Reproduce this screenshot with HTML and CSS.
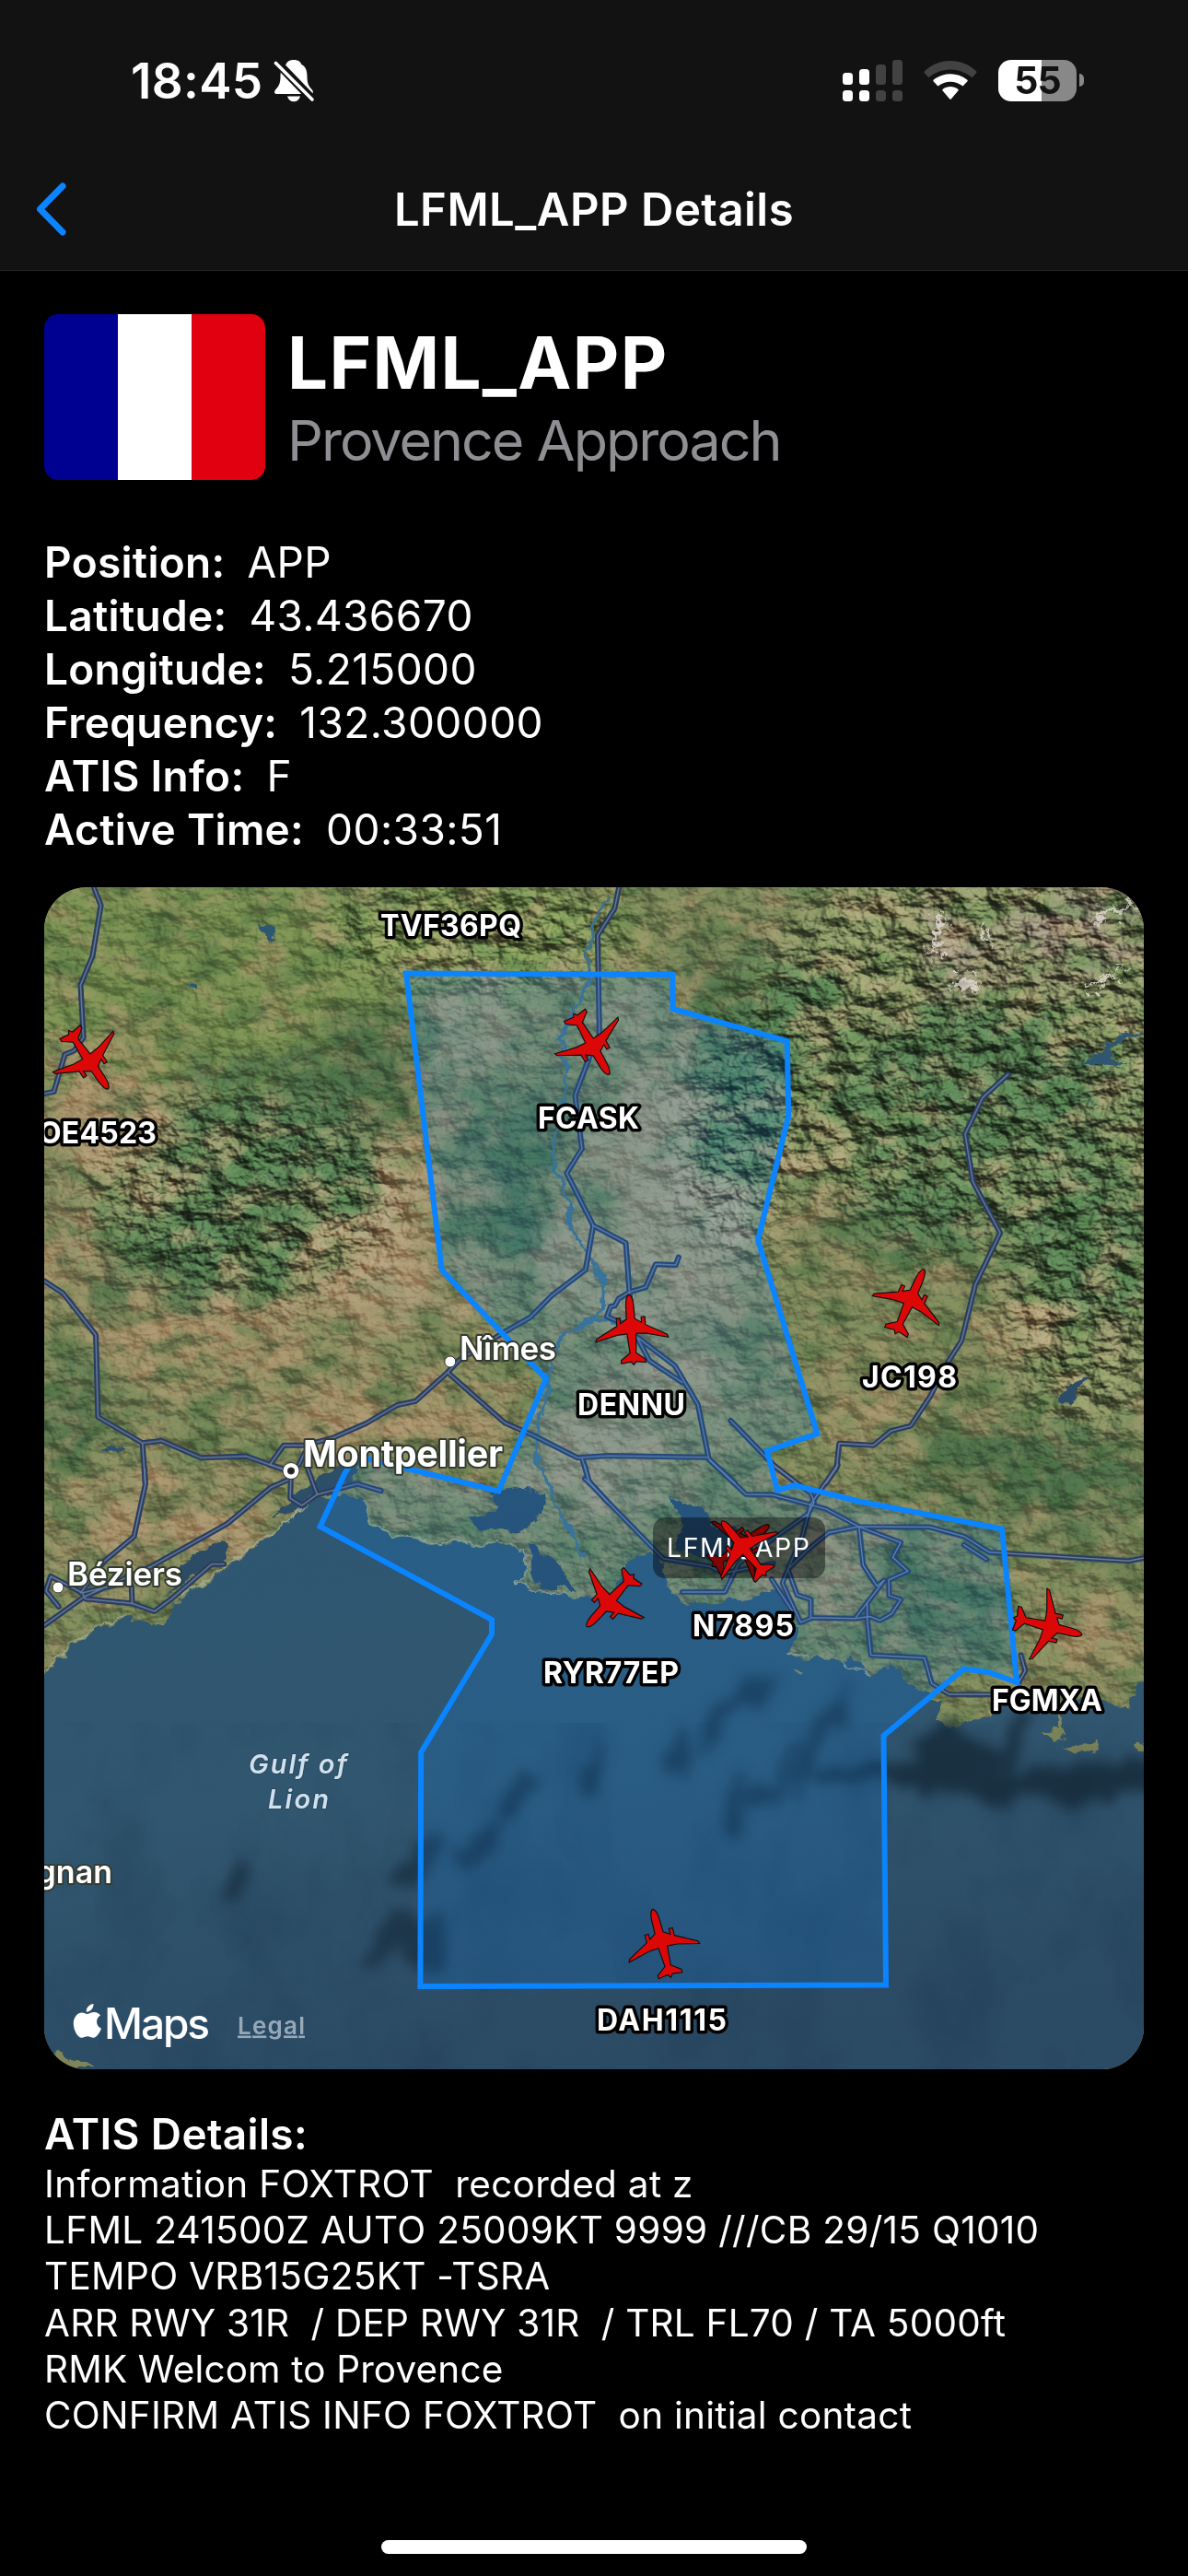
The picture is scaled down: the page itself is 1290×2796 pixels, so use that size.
FILE: index.html
```html
<!DOCTYPE html>
<html lang="en">
<head>
<meta charset="utf-8">
<title>LFML_APP Details</title>
<link rel="stylesheet" href="styles.css">
</head>
<body>
<div class="screen">
  <header class="top">
    <div class="status">
      <div class="clock">
        <span class="time">18:45</span>
        <svg class="bell" width="44" height="48" viewBox="0 0 44 48" fill="#fff">
          <path d="M22 1c-5 0-7.600 2.300-8.400 5C9 8 7.500 13 7.500 19c0 8-2 10.500-5 14-2.500 3-1.500 5 1.500 5h36c3 0 4-2 1.500-5-3-3.500-5-6-5-14 0-6-1.500-11-6.100-13C29.600 3.300 27 1 22 1z"/>
          <path d="M15 40.500h14c-1 3.800-3.600 5.800-7 5.800s-6-2-7-5.800z"/>
          <path d="M2.500 2.500L42 43.500" stroke="#121212" stroke-width="9.500"/>
          <path d="M2.500 4.500L42 44" stroke="#fff" stroke-width="3.600" stroke-linecap="round"/>
        </svg>
      </div>
      <div class="indicators">
        <svg width="65" height="45" viewBox="0 0 65 45">
          <g fill="#fff"><rect y="14" width="11" height="13" rx="3.500"/><rect x="18" y="10" width="11" height="17" rx="3.500"/><rect y="33" width="11" height="12" rx="3.500"/><rect x="18" y="33" width="11" height="12" rx="3.500"/></g>
          <g fill="#424242"><rect x="36" y="5" width="11" height="22" rx="3.500"/><rect x="54" width="11" height="27" rx="3.500"/><rect x="36" y="33" width="11" height="12" rx="3.500"/><rect x="54" y="33" width="11" height="12" rx="3.500"/></g>
        </svg>
        <svg class="wifi" width="58" height="43" viewBox="0 0 58 43">
          <path fill="#424242" d="M.8 13.200Q0 12.200 1 11.200C17-3.600 41-3.600 57 11.200q1 1 .2 2L52.600 18.300C39 6.500 19 6.500 5.400 18.300z"/>
          <path fill="#fff" d="M10.700 22.500q-.9-1 .2-2C21.500 12.300 36.500 12.300 47.100 20.500q1.100 1 .2 2L42.500 27.500C34.500 21 23.500 21 15.500 27.500z"/>
          <path fill="#fff" d="M20.600 32.600q-.9-1 .2-1.900C25.500 27 32.500 27 37.200 30.700q1.100.9.200 1.900L30 41.200q-1 1-2 0z"/>
        </svg>
        <div class="battery"><span class="cell">55</span><span class="nub"></span></div>
      </div>
    </div>
    <div class="nav">
      <svg class="back" width="36" height="62" viewBox="0 0 36 62"><path d="M31 5L6.500 30 31 55" fill="none" stroke="#0a84ff" stroke-width="7" stroke-linecap="round" stroke-linejoin="round"/></svg>
      <h1>LFML_APP Details</h1>
    </div>
  </header>

  <main>
    <section class="station">
      <div class="flag"><i class="blue"></i><i class="white"></i><i class="red"></i></div>
      <div class="names">
        <h2>LFML_APP</h2>
        <p>Provence Approach</p>
      </div>
    </section>

    <dl class="facts">
      <div><dt>Position:</dt><dd>APP</dd></div>
      <div><dt>Latitude:</dt><dd>43.436670</dd></div>
      <div><dt>Longitude:</dt><dd>5.215000</dd></div>
      <div><dt>Frequency:</dt><dd>132.300000</dd></div>
      <div><dt>ATIS Info:</dt><dd>F</dd></div>
      <div><dt>Active Time:</dt><dd>00:33:51</dd></div>
    </dl>

    <svg class="map" width="1194" height="1283" viewBox="48 963 1194 1283">
      <defs>
        <filter id="soft" x="-50%" y="-50%" width="200%" height="200%"><feGaussianBlur stdDeviation="26"/></filter>
        <filter id="smudge" x="-50%" y="-50%" width="200%" height="200%" color-interpolation-filters="sRGB">
          <feTurbulence type="fractalNoise" baseFrequency=".018 .009" numOctaves="4" seed="8" result="n"/>
          <feDisplacementMap in="SourceGraphic" in2="n" scale="80" xChannelSelector="R" yChannelSelector="G"/>
          <feGaussianBlur stdDeviation="7"/>
        </filter>
        <filter id="rough" x="-5%" y="-5%" width="110%" height="110%" color-interpolation-filters="sRGB">
          <feTurbulence type="fractalNoise" baseFrequency=".06" numOctaves="4" seed="3" result="n"/>
          <feDisplacementMap in="SourceGraphic" in2="n" scale="16" xChannelSelector="R" yChannelSelector="G"/>
        </filter>
        <filter id="snow" x="-5%" y="-5%" width="110%" height="110%" color-interpolation-filters="sRGB">
          <feTurbulence type="fractalNoise" baseFrequency=".09" numOctaves="4" seed="6" result="n"/>
          <feDisplacementMap in="SourceGraphic" in2="n" scale="46" xChannelSelector="R" yChannelSelector="G"/>
        </filter>
        <filter id="patchy" x="-10%" y="-10%" width="120%" height="120%" color-interpolation-filters="sRGB">
          <feGaussianBlur stdDeviation="20" result="b"/>
          <feTurbulence type="fractalNoise" baseFrequency=".022" numOctaves="5" seed="5" result="n"/>
          <feDisplacementMap in="b" in2="n" scale="130" xChannelSelector="R" yChannelSelector="G"/>
        </filter>
        <filter id="soil" x="0" y="0" width="100%" height="100%" color-interpolation-filters="sRGB">
          <feTurbulence type="fractalNoise" baseFrequency=".022 .032" numOctaves="6" seed="21"/>
          <feColorMatrix values="0 0 0 0 .66  0 0 0 0 .56  0 0 0 0 .42  4 0 0 0 -1.900"/>
        </filter>
        <filter id="woods" x="0" y="0" width="100%" height="100%" color-interpolation-filters="sRGB">
          <feTurbulence type="fractalNoise" baseFrequency=".02 .034" numOctaves="6" seed="47"/>
          <feColorMatrix values="0 0 0 0 .26  0 0 0 0 .40  0 0 0 0 .23  0 4 0 0 -1.900"/>
        </filter>
        <filter id="relief" x="0" y="0" width="100%" height="100%" color-interpolation-filters="sRGB">
          <feTurbulence type="fractalNoise" baseFrequency=".034 .044" numOctaves="4" seed="12"/>
          <feColorMatrix values="0 0 0 0 0  0 0 0 0 0  0 0 0 0 0  1 0 0 0 0"/>
          <feDiffuseLighting surfaceScale="13" diffuseConstant=".7" lighting-color="#fff"><feDistantLight azimuth="305" elevation="50"/></feDiffuseLighting>
        </filter>
        <filter id="ripple" x="0" y="0" width="100%" height="100%" color-interpolation-filters="sRGB">
          <feTurbulence type="fractalNoise" baseFrequency=".012 .008" numOctaves="4" seed="9"/>
          <feColorMatrix values="0 0 0 0 .08  0 0 0 0 .18  0 0 0 0 .28  2 0 0 0 -.9"/>
        </filter>
        <linearGradient id="water" x1="0" y1="0" x2=".25" y2="1"><stop offset="0" stop-color="#2f5772"/><stop offset=".55" stop-color="#31566f"/><stop offset="1" stop-color="#2b4a64"/></linearGradient>
        <mask id="highlands">
          <g fill="#fff" filter="url(#soft)">
            <ellipse cx="1070" cy="1130" rx="260" ry="220"/><ellipse cx="270" cy="1300" rx="170" ry="110"/><ellipse cx="520" cy="1010" rx="170" ry="50"/><ellipse cx="1180" cy="1400" rx="90" ry="150"/><ellipse cx="800" cy="1240" rx="60" ry="120"/>
          </g>
        </mask>
        <path id="plane" d="M0-38.500C2.600-38 4.100-32 4.200-27L4.600-12 11.500-7.500V-13.500H15.500V-5L38.500 7.500 39.500 10.500 16 4.800 5 4 3.300 25 13.300 32.500V36L2.600 34.500 0 38 -2.600 34.500 -13.300 36V32.500L-3.300 25 -5 4 -16 4.800 -39.500 10.500 -38.500 7.500 -15.500-5V-13.500H-11.500V-7.500L-4.600-12 -4.200-27C-4.100-32-2.600-38 0-38.500z"/>
        <g id="roads">
          <g transform="matrix(.39541 0 0 .42092 40 950)">
            <path d="M152 20L176 78 153 208 120 283 128 418 103 452 77 462 47 558 20 563"/>
            <path d="M20 1046L72 1078 162 1185 168 1397 290 1464 342 1458 450 1502 575 1498 640 1520 698 1536M290 1464L298 1568"/>
            <path d="M640 1520L678 1470H735L815 1450 905 1413 990 1366 1040 1356 1128 1282 1160 1250 1280 1180 1355 1140 1415 1083 1507 1017 1528 903 1455 768 1497 705 1478 568 1525 450 1545 410 1540 155 1587 85 1601 20"/>
            <path d="M1128 1282L1285 1412 1365 1445 1485 1502 1568 1497 1842 1501M1497 1502L1518 1568M735 1490L720 1520"/>
          </g>
          <g transform="matrix(.39541 0 0 .42092 640 950)">
            <path d="M10 903L100 948 110 1075 155 1062 182 1003 237 1005 245 985"/>
            <path d="M110 1075L80 1092 70 1110 58 1112 48 1138 90 1155 130 1190 235 1265 298 1365 328 1505 400 1568M130 1190L165 1252 255 1308M110 1075L120 1180"/>
            <path d="M388 1406L505 1520 570 1568"/>
            <path d="M1150 513L1080 573 1032 667 1053 790 1128 922 1060 1055 1022 1200 985 1255 935 1345 882 1420 828 1433 780 1470 686 1465 679 1528 650 1568"/>
          </g>
          <g transform="matrix(.39541 0 0 .4273 40 1590)">
            <path d="M296 10L298 50 267 182 185 245 120 325M20 408L130 335 320 255 522 150 643 57 690 38M125 325L240 300 320 255M60 360L25 320 38 283 125 325 133 340 262 352 323 372 370 340 480 252H514M262 352L260 310"/>
            <path d="M698 20L696 85 728 103 770 75 880 48 945 66M740 0L770 75M643 0L698 20M1504 0L1515 40 1568 95"/>
          </g>
          <g transform="matrix(.39541 0 0 .4273 640 1590)">
            <path d="M-13 35L0 46 203 238 330 258 370 275 505 250M255 323H372L410 250 600 125 617 95 608 72 510 5"/>
            <path d="M330 -12L430 75 503 76 650 112 740 157 935 158 1030 182 1098 222 1480 244 1530 235"/>
            <path d="M682 0L608 100 585 180 545 265 530 300 580 400M740 157L657 172 600 215 545 265 570 330 608 342V390L580 400M608 388L730 390 763 350 810 293 790 308 752 255 740 157 855 197 833 235 875 270 822 292 823 332 855 342 830 378 798 395 770 385 730 390"/>
            <path d="M763 350V395L773 483 920 490 940 555 988 583H1110M1185 483L1197 523 1180 550M1028 203L1090 240M500 290L560 375"/>
          </g>
        </g>
      </defs>

      <rect x="48" y="963" width="1194" height="1283" fill="#788357"/>
      <g filter="url(#patchy)">
        <g fill="#748a4e"><rect x="20" y="940" width="420" height="230"/><ellipse cx="520" cy="1010" rx="180" ry="60"/></g>
        <g fill="#4a6a46"><ellipse cx="310" cy="1260" rx="150" ry="95"/><ellipse cx="190" cy="1370" rx="110" ry="55"/><ellipse cx="400" cy="1170" rx="90" ry="60"/><ellipse cx="60" cy="1330" rx="30" ry="40"/><ellipse cx="80" cy="1540" rx="50" ry="45"/><ellipse cx="550" cy="1300" rx="60" ry="60"/><ellipse cx="580" cy="1210" rx="60" ry="30"/><ellipse cx="800" cy="1200" rx="50" ry="80"/><ellipse cx="1010" cy="1320" rx="100" ry="50"/><ellipse cx="820" cy="1100" rx="90" ry="60"/><ellipse cx="1060" cy="1180" rx="160" ry="80"/><ellipse cx="1180" cy="1350" rx="70" ry="100"/><ellipse cx="1120" cy="1600" rx="140" ry="50"/><ellipse cx="1020" cy="1740" rx="70" ry="60"/><ellipse cx="760" cy="1460" rx="80" ry="20"/></g>
        <g fill="#a58f69"><ellipse cx="110" cy="1190" rx="60" ry="60"/><ellipse cx="130" cy="1260" rx="80" ry="25"/><ellipse cx="70" cy="1360" rx="40" ry="50"/><ellipse cx="440" cy="1260" rx="30" ry="90" transform="rotate(25 440 1260)"/><ellipse cx="410" cy="1380" rx="90" ry="50"/><ellipse cx="220" cy="1450" rx="130" ry="40"/><ellipse cx="420" cy="1540" rx="140" ry="40"/><ellipse cx="200" cy="1650" rx="120" ry="40"/><ellipse cx="1130" cy="1450" rx="60" ry="30"/><ellipse cx="940" cy="1520" rx="60" ry="30"/><ellipse cx="890" cy="1290" rx="20" ry="70"/><ellipse cx="1180" cy="1780" rx="70" ry="30"/><ellipse cx="900" cy="1690" rx="60" ry="40"/></g>
        <g fill="#8d7f70"><ellipse cx="1170" cy="1010" rx="90" ry="40"/><ellipse cx="1040" cy="1040" rx="30" ry="50"/></g>
      </g>
      <rect x="48" y="963" width="1194" height="1283" filter="url(#soil)" opacity=".5"/>
      <rect x="48" y="963" width="1194" height="1283" filter="url(#woods)" opacity=".5"/>
      <g filter="url(#patchy)" fill="#b09c7c" opacity=".62"><ellipse cx="700" cy="1240" rx="60" ry="90"/><ellipse cx="730" cy="1360" rx="90" ry="80"/><ellipse cx="690" cy="1080" rx="45" ry="30"/><ellipse cx="510" cy="1110" rx="40" ry="50"/><ellipse cx="620" cy="1370" rx="50" ry="50"/><ellipse cx="650" cy="1580" rx="70" ry="60"/><ellipse cx="740" cy="1500" rx="70" ry="40"/><ellipse cx="450" cy="1400" rx="60" ry="30"/><ellipse cx="430" cy="1290" rx="20" ry="70" transform="rotate(25 430 1290)"/></g>
      <rect class="shade" x="48" y="963" width="1194" height="1283" filter="url(#relief)" opacity=".3"/>
      <g class="shade" mask="url(#highlands)"><rect x="48" y="963" width="1194" height="1283" filter="url(#relief)" opacity=".6"/></g>
      <g filter="url(#snow)" fill="#e4ded6" opacity=".75">
        <path d="M1038 1064l10-6 14 3 6-4-4 12-12 8-12-4zM1020 1000l6-12 2 16-8 20-8 18 3-24zM1066 1006l3 20 6 6-3-20zM1190 994l30-14 18-6-14 12-30 14zM1180 1068l24-8 26-18-22 20-24 12z"/>
      </g>

      <g filter="url(#rough)">
        <path d="M660 975L642 1003 636 1035 642 1062 625 1095 611 1122 614 1180 600 1260 613 1290 620 1335 640 1365 656 1392 655 1420 640 1432 612 1446 600 1480 586 1540 582 1580 600 1620 632 1690M640 1432L700 1440" fill="none" stroke="#41708a" stroke-width="4"/>
        <g id="sea" fill="url(#water)">
          <path d="M30 1830L48 1817 84 1782 133 1756 174 1764 196 1737 238 1707 261 1691 285 1675 317 1647 344 1628 376 1623 396 1630 400 1652 424 1667 459 1673 503 1677 542 1675 568 1684 572 1703 562 1716 582 1729 617 1731 650 1735 664 1726 670 1709 682 1694 703 1686 719 1699 725 1722 739 1737 770 1740 798 1737 814 1735 830 1724 846 1726 855 1744 867 1767 861 1782 852 1797 881 1799 909 1803 927 1799 948 1820 956 1810 976 1812 994 1835 1025 1846 1016 1867 1039 1876 1059 1863 1079 1865V1850L1114 1855 1194 1842 1225 1855 1233 1833 1260 1820V2270H30z"/>
          <path d="M296 1648L330 1616 350 1600 380 1583 394 1592 375 1610 330 1638zM182 1732L196 1700 222 1680 244 1676 246 1690 215 1708zM535 1618L560 1614 592 1620 588 1645 566 1664 520 1658 508 1647 536 1642zM572 1674L600 1690 625 1725 585 1725 576 1700zM725 1624L745 1632 765 1637 772 1655 800 1658 808 1688 780 1692 735 1682 740 1650zM279 1005L290 1006 302 1020 292 1021zM1246 1118L1219 1123 1200 1134 1174 1157 1200 1154 1222 1160 1204 1148 1206 1136zM1180 1493L1165 1502 1144 1524 1161 1527 1172 1510zM203 1068H212V1072H203zM110 1572L130 1568 134 1574 118 1576z"/>
        </g>
        <g fill="#7e8558"><path d="M1130 1880L1155 1876 1160 1884 1140 1886zM1156 1896L1180 1892 1194 1886 1190 1898 1168 1906zM1232 1894L1250 1890V1900H1236zM44 2224L70 2232 100 2246H44zM861 1810l12 4-4 4zM1150 1860l4 0-1 20-3 0z"/></g>
      </g>
      <path class="surf" d="M48 1814L84 1779 133 1753M196 1734L238 1704 285 1672 344 1625M396 1630L402 1652 426 1666 461 1671 503 1675 542 1673 568 1683 572 1703 562 1716 582 1728 617 1731M852 1795L881 1797M909 1801L948 1818" filter="url(#rough)"/>
      <svg x="48" y="1870" width="1194" height="376" viewBox="48 1870 1194 376"><rect x="48" y="1870" width="1194" height="376" filter="url(#ripple)" opacity=".28"/></svg>
      <g filter="url(#smudge)" fill="#142838">
        <g opacity=".8"><ellipse cx="1040" cy="1928" rx="90" ry="22"/><ellipse cx="1030" cy="1898" rx="50" ry="14"/><ellipse cx="1190" cy="1935" rx="90" ry="24"/><ellipse cx="1095" cy="1905" rx="16" ry="38"/><ellipse cx="950" cy="1925" rx="70" ry="10"/></g>
        <g opacity=".62"><ellipse cx="884" cy="1890" rx="13" ry="60" transform="rotate(22 884 1890)"/><ellipse cx="840" cy="1930" rx="9" ry="40" transform="rotate(30 840 1930)"/><ellipse cx="790" cy="1870" rx="50" ry="10" transform="rotate(-35 790 1870)"/><ellipse cx="570" cy="1950" rx="40" ry="13" transform="rotate(-40 570 1950)"/><ellipse cx="520" cy="2000" rx="30" ry="12" transform="rotate(-40 520 2000)"/><ellipse cx="440" cy="2030" rx="36" ry="15" transform="rotate(-40 440 2030)"/><ellipse cx="805" cy="1960" rx="10" ry="40"/><ellipse cx="735" cy="1890" rx="9" ry="34"/><ellipse cx="640" cy="1920" rx="10" ry="30"/><ellipse cx="440" cy="2110" rx="40" ry="18" transform="rotate(-30 440 2110)"/><ellipse cx="250" cy="2040" rx="14" ry="26"/></g>
      </g>

      <use href="#roads" class="casing"/>
      <use href="#roads" class="lane"/>

      <path class="airspace" d="M441 1056.500L730.500 1058V1095L854.700 1130 856.300 1211 823 1346 887.500 1556 833 1575 844 1617.500 862.600 1612 932.600 1629.500 1088 1659.500 1104.200 1826 1073 1815 1046.500 1811.500 959.500 1884 962 2154.500 456.400 2156 457.200 1902 534 1774V1758L347.600 1657 374 1600 386 1580 541.400 1618.500 592.800 1496.500 479.700 1378.500z"/>

      <g class="town">
        <circle cx="488.800" cy="1478" r="6"/><circle cx="63" cy="1723" r="6"/>
        <circle cx="316" cy="1596.500" r="9"/><circle cx="316" cy="1596.500" r="3.600" fill="#222"/>
        <text x="499" y="1476" font-size="35" textLength="105">Nîmes</text>
        <text x="329" y="1592" font-size="39.500" textLength="217" class="big">Montpellier</text>
        <text x="73" y="1721" font-size="35" textLength="125">Béziers</text>
        <text x="122" y="2044" font-size="34" text-anchor="end">gnan</text>
      </g>
      <g class="gulf"><text x="270" y="1925" textLength="107">Gulf of</text><text x="291" y="1963" textLength="66">Lion</text></g>

      <use href="#plane" class="plane" transform="translate(804 1678) rotate(54)"/>
      <rect x="709" y="1647" width="187" height="66" rx="13" fill="#000" fill-opacity=".42"/>
      <text class="pin" x="724" y="1690" textLength="155">LFML_APP</text>
      <g class="plane">
        <use href="#plane" transform="translate(642 1133) rotate(150)"/>
        <use href="#plane" transform="translate(96 1150) rotate(146)"/>
        <use href="#plane" transform="translate(685.600 1443.500) rotate(-4)"/>
        <use href="#plane" transform="translate(987.500 1413) rotate(24)"/>
        <use href="#plane" transform="translate(808 1681) rotate(-39)"/>
        <use href="#plane" transform="translate(663 1737) rotate(222)"/>
        <use href="#plane" transform="translate(1137.500 1765) rotate(104)"/>
        <use href="#plane" transform="translate(718.700 2109.500) rotate(-15)"/>
      </g>
      <g class="callsign">
        <text x="413" y="1016" textLength="153">TVF36PQ</text>
        <text x="584" y="1224.500" textLength="110">FCASK</text>
        <text x="42" y="1240.500" textLength="128">OE4523</text>
        <text x="627" y="1536" textLength="117">DENNU</text>
        <text x="936" y="1506" textLength="103">JC198</text>
        <text x="752" y="1776" textLength="110">N7895</text>
        <text x="590" y="1827" textLength="147">RYR77EP</text>
        <text x="1077" y="1857" textLength="120">FGMXA</text>
        <text x="648" y="2204" textLength="141">DAH1115</text>
      </g>
      <g fill="#fff">
        <path d="M101.500 2175c.4 4.500-3.600 9-7.700 8.700-.5-4.300 3.600-8.500 7.700-8.700zM94.500 2186c2 0 4.500-2 8-2 2.500 0 5 1.300 6.500 3.600-5.800 3.500-4.900 11.800 1 14.200-1.500 4-5 10-8.600 10-2.500 0-3.400-1.500-6.300-1.500s-4 1.500-6.400 1.500c-4 0-8.900-8.200-8.900-15.400 0-7.400 4.700-12 9.300-12 2.500 0 4 1.600 5.400 1.600z"/>
        <text class="brand" x="113" y="2212.500" textLength="115">Maps</text>
      </g>
      <text class="legal" x="258" y="2207.500" textLength="73">Legal</text>
    </svg>

    <section class="atis">
      <h3>ATIS Details:</h3>
      <p class="l1">Information FOXTROT  recorded at z</p>
      <p class="l2">LFML 241500Z AUTO 25009KT 9999 ///CB 29/15 Q1010</p>
      <p class="l3">TEMPO VRB15G25KT -TSRA</p>
      <p class="l4">ARR RWY 31R  / DEP RWY 31R  / TRL FL70 / TA 5000ft</p>
      <p class="l5">RMK Welcom to Provence</p>
      <p class="l6">CONFIRM ATIS INFO FOXTROT  on initial contact</p>
    </section>
  </main>
  <div class="home"></div>
</div>
</body>
</html>
```
FILE: styles.css
```css
* { box-sizing: border-box; margin: 0; padding: 0; }
body { background: #000; color: #fff; font-family: Inter, "Liberation Sans", sans-serif; }
.screen { width: 1290px; height: 2796px; display: flex; flex-direction: column; background: #000; overflow: hidden; }

.top { height: 294px; background: #121212; border-bottom: 1px solid #262626; }
.status { height: 176px; padding: 0 113px 0 142px; display: flex; justify-content: space-between; align-items: center; }
.clock { display: flex; align-items: center; gap: 12px; }
.time { font-size: 53px; font-weight: 600; letter-spacing: .3px; }
.indicators { display: flex; align-items: center; gap: 23px; padding-bottom: 2px; }
.battery { display: flex; align-items: center; gap: 3px; }
.cell { width: 85px; height: 45px; border-radius: 14px; background: linear-gradient(90deg, #fff 47px, #888 47px); color: #121212; font-size: 41px; font-weight: 700; line-height: 45px; text-align: center; letter-spacing: -1px; }
.nub { width: 5px; height: 14px; border-radius: 0 5px 5px 0; background: #888; }
.nav { height: 103px; display: grid; grid-template-columns: 160px 1fr 160px; align-items: center; }
.back { margin-left: 37px; }
.nav h1 { font-size: 49px; font-weight: 600; text-align: center; letter-spacing: .5px; }

main { padding: 47px 48px 0; }
.station { display: flex; gap: 24px; height: 180px; }
.flag { width: 240px; height: 180px; border-radius: 15px; overflow: hidden; display: flex; }
.flag i { flex: 1; }
.blue { background: #000091; }
.white { background: #fff; }
.red { background: #e1000f; }
.names { padding-top: 7px; }
.names h2 { font-size: 78px; font-weight: 700; line-height: 91px; letter-spacing: 1.3px; }
.names p { font-size: 61px; line-height: 79px; color: #8e8e93; letter-spacing: -2px; }

.facts { margin-top: 60px; font-size: 46px; }
.facts div { display: flex; height: 58px; align-items: center; gap: 24px; }
.facts dt { font-weight: 600; letter-spacing: .3px; }
.facts dd { letter-spacing: .4px; }

.map { display: block; margin-top: 34px; border-radius: 46px; }
.shade { mix-blend-mode: overlay; }
#roads path { vector-effect: non-scaling-stroke; fill: none; stroke-linejoin: round; stroke-linecap: round; }
.casing { stroke: #2a3c5e; stroke-width: 6; }
.lane { stroke: #687d9c; stroke-width: 1.5; }
.surf { fill: none; stroke: #a9b3a0; stroke-width: 1.6; opacity: .7; }
.airspace { fill: #0a84ff; fill-opacity: .15; stroke: #0a84ff; stroke-width: 6; }
.plane { fill: #dc0808; stroke: #111; stroke-width: 1.2; }
.map text { font-family: Inter, sans-serif; paint-order: stroke; stroke-linejoin: round; }
.callsign text { font-size: 32px; font-weight: 700; fill: #fff; stroke: #000; stroke-width: 7; }
.town { fill: #fff; stroke: #333; stroke-width: 1; }
.town text { font-weight: 600; stroke: #333a30; stroke-width: 4; }
.town .big { font-weight: 700; }
.gulf text { font-size: 29px; font-weight: 600; font-style: italic; fill: #cfe0ee; stroke: #2b485c; stroke-width: 2; }
.pin { font-size: 28.500px; fill: #fff; }
.brand { font-size: 46px; font-weight: 500; }
.legal { font-size: 26px; font-weight: 600; fill: #97a9b9; text-decoration: underline; }

.atis { margin-top: 41px; }
.atis h3 { font-size: 46px; font-weight: 600; line-height: 58px; letter-spacing: .35px; padding-bottom: 1px; box-sizing: content-box; }
.atis p { font-size: 40.500px; line-height: 50.200px; white-space: pre; letter-spacing: .3px; }
.atis .l4 { letter-spacing: .22px; }
.atis .l5 { letter-spacing: .13px; }
.atis .l6 { letter-spacing: .25px; }

.home { width: 462px; height: 15px; border-radius: 8px; background: #fff; margin: auto auto 24px; flex: none; }
```
